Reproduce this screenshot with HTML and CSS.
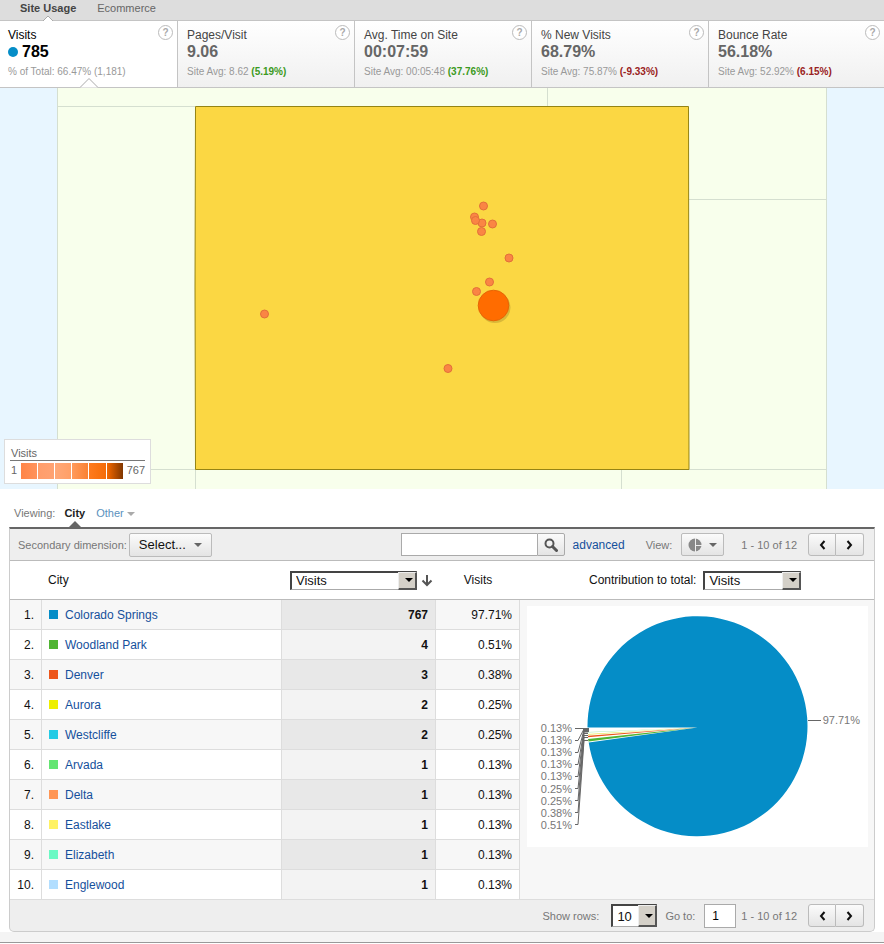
FILE: index.html
```html
<!DOCTYPE html>
<html lang="en">
<head>
<meta charset="utf-8">
<title>Site Usage</title>
<link rel="stylesheet" href="styles.css">
</head>
<body>
<nav class="tabs">
  <a class="tab tab-active" href="#usage">Site Usage<svg class="tab-notch" width="12" height="6" viewBox="0 0 12 6"><path d="M1 6l5-5 5 5" fill="#fff" stroke="#aaa"/></svg></a>
  <a class="tab" href="#ecommerce">Ecommerce</a>
</nav>

<section class="metrics">
  <article class="metric metric-active">
    <h2 class="metric-name">Visits</h2>
    <p class="metric-value"><span class="dot"></span>785</p>
    <p class="metric-note">% of Total: 66.47% (1,181)</p>
    <button class="help" type="button">?</button>
    <svg class="notch" width="18" height="10" viewBox="0 0 18 10"><path d="M0 9.500L9 .5l9 9" fill="#fff" stroke="#aaa"/></svg>
  </article>
  <article class="metric">
    <h2 class="metric-name">Pages/Visit</h2>
    <p class="metric-value">9.06</p>
    <p class="metric-note">Site Avg: 8.62 <b class="up">(5.19%)</b></p>
    <button class="help" type="button">?</button>
  </article>
  <article class="metric">
    <h2 class="metric-name">Avg. Time on Site</h2>
    <p class="metric-value">00:07:59</p>
    <p class="metric-note">Site Avg: 00:05:48 <b class="up">(37.76%)</b></p>
    <button class="help" type="button">?</button>
  </article>
  <article class="metric">
    <h2 class="metric-name">% New Visits</h2>
    <p class="metric-value">68.79%</p>
    <p class="metric-note">Site Avg: 75.87% <b class="down">(-9.33%)</b></p>
    <button class="help" type="button">?</button>
  </article>
  <article class="metric">
    <h2 class="metric-name">Bounce Rate</h2>
    <p class="metric-value">56.18%</p>
    <p class="metric-note">Site Avg: 52.92% <b class="down">(6.15%)</b></p>
    <button class="help" type="button">?</button>
  </article>
</section>

<section class="map">
  <svg class="map-canvas" viewBox="0 0 884 401">
    <rect width="884" height="401" fill="#e8f6ff"/>
    <rect x="57" width="770" height="401" fill="#f8ffec"/>
    <path d="M57.500 0v401M826.500 0v401M547.500 0v18M57 18.500h138M689 111.500h138M57 381.500h138M689 381.500h138M195.500 381v20M621.500 381v20" fill="none" stroke="#d5dfd0"/>
    <path d="M195.500 18.500H688.500L689 381.500H195.500L195 200Z" fill="#fbd743" stroke="#958414"/>
    <g fill="#fa8544" stroke="#e2703a">
      <circle cx="483.500" cy="118" r="4"/>
      <circle cx="474.500" cy="129" r="4"/>
      <circle cx="482" cy="135" r="4"/>
      <circle cx="475.500" cy="132.500" r="4"/>
      <circle cx="492.500" cy="136" r="4"/>
      <circle cx="481.500" cy="143.500" r="4"/>
      <circle cx="509" cy="170" r="4"/>
      <circle cx="489.500" cy="194" r="4"/>
      <circle cx="476.500" cy="203.500" r="4"/>
      <circle cx="264.500" cy="226" r="4"/>
      <circle cx="448" cy="280.500" r="4"/>
    </g>
    <circle cx="495" cy="219.500" r="15.500" fill="#b89a30" opacity=".5"/>
    <circle cx="493.500" cy="217.500" r="15.300" fill="#ff6c00" stroke="#e66505"/>
  </svg>
  <div class="legend">
    <p class="legend-title">Visits</p>
    <div class="legend-scale">
      <span>1</span>
      <span class="ramp"><i></i><i></i><i></i><i></i><i></i><i></i></span>
      <span>767</span>
    </div>
  </div>
</section>

<main class="report">
  <nav class="viewing">
    <span class="viewing-label">Viewing:</span>
    <a class="view-link view-active" href="#city">City</a>
    <a class="view-link" href="#other">Other <span class="caret caret-light"></span></a>
  </nav>

  <section class="panel">
    <div class="toolbar">
      <label for="dimension">Secondary dimension:</label>
      <button class="button select-button" id="dimension" type="button">Select... <span class="caret"></span></button>
      <form class="search">
        <input class="search-box" type="text" aria-label="Search">
        <button class="button search-button" type="button" aria-label="Search">
          <svg width="14" height="14" viewBox="0 0 14 14" fill="none" stroke="#555"><circle cx="5.500" cy="5.500" r="4" stroke-width="2"/><path d="M8.500 8.500l4 4" stroke-width="3" stroke-linecap="round"/></svg>
        </button>
      </form>
      <a class="advanced" href="#advanced">advanced</a>
      <label class="view-label" for="view">View:</label>
      <button class="button view-button" id="view" type="button">
        <svg width="14" height="14" viewBox="0 0 14 14"><circle cx="7" cy="7" r="6.500" fill="#888"/><path d="M7.500 0v14M7.500 7.500H14" stroke="#eee" fill="none"/></svg>
        <span class="caret"></span>
      </button>
      <span class="range">1 - 10 of 12</span>
      <div class="pager">
        <button class="button" type="button" aria-label="Previous"><svg width="7" height="10" viewBox="0 0 7 10"><path d="M5.500 1L2 5l3.500 4" fill="none" stroke="#111" stroke-width="2"/></svg></button>
        <button class="button" type="button" aria-label="Next"><svg width="7" height="10" viewBox="0 0 7 10"><path d="M1.500 1L5 5 1.500 9" fill="none" stroke="#111" stroke-width="2"/></svg></button>
      </div>
    </div>

    <table class="data">
      <colgroup><col class="col-rank"><col class="col-city"><col class="col-visits"><col class="col-share"><col></colgroup>
      <thead>
        <tr>
          <th></th>
          <th class="head-city">City</th>
          <th>
            <div class="head-controls">
              <span class="dropdown"><select class="field-wide" aria-label="Metric"><option>Visits</option></select></span>
              <svg width="12" height="13" viewBox="0 0 12 13"><path d="M6 1v10M1.500 6.500L6 11l4.500-4.500" fill="none" stroke="#555" stroke-width="2"/></svg>
            </div>
          </th>
          <th class="head-share">Visits</th>
          <th>
            <div class="head-chart">
              <label for="contribution">Contribution to total:</label>
              <span class="dropdown"><select class="field-medium" id="contribution"><option>Visits</option></select></span>
            </div>
          </th>
        </tr>
      </thead>
      <tbody>
        <tr><td class="rank">1.</td><td class="city"><i class="swatch c1"></i><a href="#1">Colorado Springs</a></td><td class="visits">767</td><td class="share">97.71%</td>
          <td class="chart" rowspan="10">
            <svg class="pie" viewBox="0 0 341 241">
              <rect width="341" height="241" fill="#fff"/>
              <path d="M170.500 121.500H60.500A110 110 0 1 1 61.700 136.500Z" fill="#058dc7"/>
              <path d="M170 121.500L61.500 135.500 61 133Z" fill="#50b432"/>
              <path d="M170 121.500L61 131.200 61 129.700Z" fill="#ed561b"/>
              <path d="M170 121.500L61 128.800 61 128Z" fill="#dddf00" opacity=".7"/>
              <path d="M170 121.500L61 126.400 61 126Z" fill="#64e572" opacity=".6"/>
              <path d="M56 122h6v4h-6z" fill="#666"/>
              <g fill="none" stroke="#666">
                <path d="M48 122.500h13M48 134.500h3L57 123h4M48 146.500h3L57 124h4M48 158.500h3L57 125h4M48 170.500h3L57 126h4M48 182.500h3L57 127.500h4M48 194.500h3L57 129.500h4M48 206.500h3L57 131.500h4M48 218.500h3L57 134.500h4M281 114.500h13"/>
              </g>
              <g class="pie-labels" text-anchor="end">
                <text x="45" y="126">0.13%</text><text x="45" y="138">0.13%</text><text x="45" y="150">0.13%</text>
                <text x="45" y="162">0.13%</text><text x="45" y="174">0.13%</text><text x="45" y="187">0.25%</text>
                <text x="45" y="199">0.25%</text><text x="45" y="211">0.38%</text><text x="45" y="223">0.51%</text>
                <text x="333" y="118">97.71%</text>
              </g>
            </svg>
          </td></tr>
        <tr><td class="rank">2.</td><td class="city"><i class="swatch c2"></i><a href="#2">Woodland Park</a></td><td class="visits">4</td><td class="share">0.51%</td></tr>
        <tr><td class="rank">3.</td><td class="city"><i class="swatch c3"></i><a href="#3">Denver</a></td><td class="visits">3</td><td class="share">0.38%</td></tr>
        <tr><td class="rank">4.</td><td class="city"><i class="swatch c4"></i><a href="#4">Aurora</a></td><td class="visits">2</td><td class="share">0.25%</td></tr>
        <tr><td class="rank">5.</td><td class="city"><i class="swatch c5"></i><a href="#5">Westcliffe</a></td><td class="visits">2</td><td class="share">0.25%</td></tr>
        <tr><td class="rank">6.</td><td class="city"><i class="swatch c6"></i><a href="#6">Arvada</a></td><td class="visits">1</td><td class="share">0.13%</td></tr>
        <tr><td class="rank">7.</td><td class="city"><i class="swatch c7"></i><a href="#7">Delta</a></td><td class="visits">1</td><td class="share">0.13%</td></tr>
        <tr><td class="rank">8.</td><td class="city"><i class="swatch c8"></i><a href="#8">Eastlake</a></td><td class="visits">1</td><td class="share">0.13%</td></tr>
        <tr><td class="rank">9.</td><td class="city"><i class="swatch c9"></i><a href="#9">Elizabeth</a></td><td class="visits">1</td><td class="share">0.13%</td></tr>
        <tr><td class="rank">10.</td><td class="city"><i class="swatch c10"></i><a href="#10">Englewood</a></td><td class="visits">1</td><td class="share">0.13%</td></tr>
      </tbody>
    </table>

    <div class="footer">
      <label for="rows">Show rows:</label>
      <span class="dropdown"><select class="field-small" id="rows"><option>10</option></select></span>
      <label class="goto-label" for="goto">Go to:</label>
      <input class="goto" id="goto" type="text" value="1">
      <span class="range">1 - 10 of 12</span>
      <div class="pager">
        <button class="button" type="button" aria-label="Previous"><svg width="7" height="10" viewBox="0 0 7 10"><path d="M5.500 1L2 5l3.500 4" fill="none" stroke="#111" stroke-width="2"/></svg></button>
        <button class="button" type="button" aria-label="Next"><svg width="7" height="10" viewBox="0 0 7 10"><path d="M1.500 1L5 5 1.500 9" fill="none" stroke="#111" stroke-width="2"/></svg></button>
      </div>
    </div>
  </section>
</main>
<div class="page-end"></div>
</body>
</html>
```
FILE: styles.css
```css
* { box-sizing: border-box; }
body {
  margin: 0;
  background: #fff;
  color: #111;
  font: 12px/16px "Liberation Sans", Arial, sans-serif;
}
h2, p { margin: 0; font-weight: normal; }
a { color: #15509c; text-decoration: none; }
button, input, select { font-family: inherit; margin: 0; }
svg { display: block; flex: none; }

.tabs {
  display: flex;
  gap: 21px;
  height: 21px;
  padding-left: 20px;
  background: #ddd;
  border-bottom: 1px solid #c4c4c4;
  font-size: 11px;
}
.tab { position: relative; color: #666; }
.tab-active { color: #444; font-weight: bold; }
.tab-notch { position: absolute; left: 50%; bottom: -1px; margin-left: -6px; }

.metrics {
  display: grid;
  grid-template-columns: 178fr 177fr 177fr 177fr 175fr;
  border-bottom: 1px solid #c4c4c4;
}
.metric {
  position: relative;
  height: 66px;
  padding: 6px 4px 0 9px;
  border-right: 1px solid #c4c4c4;
  background: linear-gradient(#fff, #f0f0f0);
  white-space: nowrap;
}
.metric:last-of-type { border-right: 0; }
.metric-active { padding-left: 8px; background: #fff; }
.metric-name { font-size: 12px; line-height: 16px; color: #444; }
.metric-value { font-size: 16px; line-height: 18px; font-weight: bold; color: #666; }
.metric-active .metric-name, .metric-active .metric-value { color: #000; }
.metric-note { margin-top: 4px; font-size: 10px; line-height: 14px; color: #999; }
.dot { display: inline-block; width: 10px; height: 10px; margin-right: 4px; border-radius: 50%; background: #058dc7; }
.up { color: #3c9a22; }
.down { color: #922; }
.help {
  position: absolute;
  top: 4px;
  right: 4px;
  width: 15px;
  height: 15px;
  padding: 0;
  border: 1px solid #bbb;
  border-radius: 50%;
  background: #fff;
  color: #aaa;
  font-size: 10px;
  font-weight: bold;
  line-height: 13px;
}
.notch { position: absolute; left: 80px; bottom: -1px; }

.map { position: relative; }
.map-canvas { width: 100%; height: auto; }
.legend {
  position: absolute;
  left: 4px;
  bottom: 5px;
  width: 147px;
  padding: 7px 5px 4px;
  border: 1px solid #ddd;
  background: #fff;
  color: #666;
  font-size: 11px;
}
.legend-title { padding: 0 1px; line-height: 13px; border-bottom: 1px solid #777; }
.legend-scale { display: flex; align-items: center; gap: 4px; margin-top: 1px; padding-left: 1px; line-height: 17px; }
.ramp { display: grid; grid-template-columns: repeat(6, 1fr); gap: 1px; flex: 1; height: 16px; }
.ramp i:nth-child(1) { background: linear-gradient(90deg, #ff8548, #ff935c); }
.ramp i:nth-child(2) { background: linear-gradient(90deg, #ff9d6b, #ffa272); }
.ramp i:nth-child(3) { background: linear-gradient(90deg, #ffa878, #ff9f67); }
.ramp i:nth-child(4) { background: linear-gradient(90deg, #ff9a5c, #fa8233); }
.ramp i:nth-child(5) { background: linear-gradient(90deg, #ff7b1e, #f56c08); }
.ramp i:nth-child(6) { background: linear-gradient(90deg, #f56900, #803600); }

.report { padding: 0 9px; }
.viewing { display: flex; gap: 9px; height: 38px; padding: 16px 5px 0; font-size: 11px; }
.viewing-label { color: #777; }
.view-link { position: relative; color: #5b91bd; }
.view-active { color: #222; font-weight: bold; margin-right: 2px; }
.view-active::after {
  content: "";
  position: absolute;
  left: 50%;
  bottom: 0;
  margin-left: -6px;
  border: 6px solid transparent;
  border-top: 0;
  border-bottom-color: #666;
}
.caret { display: inline-block; border: 4px solid transparent; border-bottom: 0; border-top-color: #666; vertical-align: middle; }
.caret-light { border-top-color: #aaa; }

.panel { border: 1px solid #ccc; border-top: 2px solid #666; border-radius: 0 0 5px 5px; background: #eee; overflow: hidden; }
.toolbar, .footer { display: flex; align-items: center; padding-right: 10px; color: #777; font-size: 11px; white-space: nowrap; }
.toolbar { height: 32px; padding-left: 8px; border-bottom: 1px solid #bbb; }
.button {
  display: flex;
  align-items: center;
  justify-content: center;
  height: 24px;
  padding: 0;
  border: 1px solid #bbb;
  border-radius: 2px;
  background: linear-gradient(#fbfbfb, #e4e4e4);
  color: #111;
}
.select-button { width: 83px; gap: 8px; margin-left: 2px; font-size: 13px; }
.search { display: flex; margin-left: auto; }
.search-box { width: 136px; height: 23px; padding: 2px 4px; border: 1px solid #aaa; border-right: 0; background: #fff; font-size: 12px; }
.search-button { width: 28px; height: 23px; border-radius: 0 2px 2px 0; border-color: #aaa; }
.advanced { margin-left: 8px; font-size: 12px; }
.view-label { margin-left: 21px; }
.view-button { width: 43px; gap: 7px; height: 23px; margin-left: 9px; }
.range { margin-left: 17px; }
.pager { display: flex; margin-left: 11px; }
.pager .button { width: 28px; height: 23px; }
.pager .button:first-child { border-radius: 3px 0 0 3px; }
.pager .button:last-child { border-radius: 0 3px 3px 0; border-left: 0; }

.dropdown { position: relative; display: inline-block; }
.dropdown select {
  display: block;
  appearance: none;
  height: 19px;
  padding: 0 18px 0 4px;
  border: 1px solid #aaa;
  border-top: 2px solid #444;
  border-left: 2px solid #444;
  border-radius: 0;
  background: #fff;
  color: #111;
  font-size: 13px;
}
.dropdown::before {
  content: "";
  position: absolute;
  top: 1px;
  right: 0;
  bottom: 0;
  width: 16px;
  border: 1px solid #eee;
  border-right: 2px solid #555;
  border-bottom: 2px solid #555;
  background: #d4d0c8;
  pointer-events: none;
  z-index: 1;
}
.dropdown::after {
  content: "";
  position: absolute;
  right: 4px;
  top: 50%;
  margin-top: -2px;
  border: 4px solid transparent;
  border-bottom: 0;
  border-top-color: #000;
  pointer-events: none;
  z-index: 2;
}
.dropdown .field-wide { width: 127px; }
.dropdown .field-medium { width: 98px; }
.dropdown .field-small { width: 46px; height: 23px; }

.data { width: 100%; table-layout: fixed; border-collapse: separate; border-spacing: 0; background: #fff; }
.col-rank { width: 32px; }
.col-city { width: 240px; }
.col-visits { width: 154px; }
.col-share { width: 84px; }
th { height: 39px; padding: 0; border-bottom: 1px solid #bbb; font-weight: normal; text-align: left; }
.head-city { padding-left: 6px; }
.head-share { text-align: center; }
.head-controls { display: flex; align-items: center; gap: 4px; padding-left: 8px; }
.head-chart { display: flex; align-items: center; gap: 7px; padding-left: 69px; white-space: nowrap; }
td { height: 30px; padding: 0 7px; border-right: 1px solid #ddd; border-bottom: 1px solid #ddd; }
.rank, .visits, .share { text-align: right; }
.visits { font-weight: bold; background: #f3f3f3; }
tr:nth-child(odd) td { background: #f7f7f7; }
tr:nth-child(odd) .visits { background: #e8e8e8; }
.swatch { display: inline-block; width: 9px; height: 9px; margin-right: 7px; }
.c1 { background: #058dc7; }
.c2 { background: #50b432; }
.c3 { background: #ed561b; }
.c4 { background: #edef00; }
.c5 { background: #24cbe5; }
.c6 { background: #64e572; }
.c7 { background: #ff9655; }
.c8 { background: #fff263; }
.c9 { background: #6af9c4; }
.c10 { background: #b2deff; }
.chart { padding: 6px 6px 0 7px; border-right: 0; vertical-align: top; }
.pie { width: 100%; height: auto; }
.pie-labels { font-size: 11px; fill: #777; }

.footer { justify-content: flex-end; height: 31px; }
.footer .dropdown { margin-left: 12px; }
.goto-label { margin-left: 8px; }
.goto { width: 32px; height: 24px; margin-left: 9px; padding: 0 7px; border: 1px solid #aaa; background: #fff; font-size: 12px; }
.footer .range { margin-left: 5px; }
.page-end { height: 11px; background: #f4f4f4; border-bottom: 1px solid #999; }
```
